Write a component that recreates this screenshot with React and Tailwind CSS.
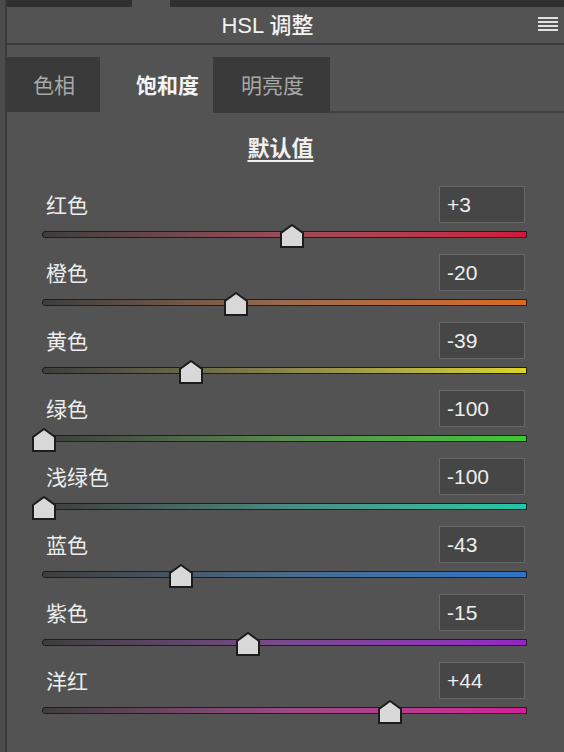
import React from 'react';

const rows = [
    { label: '红色', value: 3, track: 'bg-gradient-to-r from-[#3e3e3e] via-[#9a4c5a] to-[#d2143c]' },
    { label: '橙色', value: -20, track: 'bg-gradient-to-r from-[#3e3e3e] via-[#9a6a4c] to-[#d86a1c]' },
    { label: '黄色', value: -39, track: 'bg-gradient-to-r from-[#3e3e3e] via-[#8a864a] to-[#dcd428]' },
    { label: '绿色', value: -100, track: 'bg-gradient-to-r from-[#3e3e3e] via-[#5a8a50] to-[#3cc832]' },
    { label: '浅绿色', value: -100, track: 'bg-gradient-to-r from-[#3e3e3e] via-[#4a8a80] to-[#1cc8a8]' },
    { label: '蓝色', value: -43, track: 'bg-gradient-to-r from-[#3e3e3e] via-[#4a6c8c] to-[#2c74c8]' },
    { label: '紫色', value: -15, track: 'bg-gradient-to-r from-[#3e3e3e] via-[#7a4a8c] to-[#9424c8]' },
    { label: '洋红', value: 44, track: 'bg-gradient-to-r from-[#3e3e3e] via-[#9a4a84] to-[#d41c98]' },
];

const fmt = (v) => (v > 0 ? `+${v}` : `${v}`);

// petit curseur en forme de maison
const Thumb = ({ left }) => (
    <svg
        width="24"
        height="24"
        viewBox="0 0 24 24"
        className="absolute top-[-7px]"
        style={{ left }}
    >
        <polygon points="12,1 23,9 23,23 1,23 1,9" fill="#d8d8d8" stroke="#1c1c1c" strokeWidth="2" strokeLinejoin="miter" />
    </svg>
);

const SliderRow = ({ label, value, track }) => {
    const left = 2 + (value + 100) * 2.405 - 12;
    return (
        <div className="h-[68px] flex flex-col">
            <div className="h-[37px] flex items-center justify-between pr-[39px]">
                <span className="pl-[39px] text-[21px] text-[#eeeeee] leading-none">{label}</span>
                <div className="w-[86px] h-[37px] bg-[#464646] border border-[#686868] flex items-center pl-[7px] text-[21px] text-[#ededed] font-['Liberation_Sans',sans-serif]">
                    {fmt(value)}
                </div>
            </div>
            <div className="relative mt-[8px] ml-[35px] mr-[37px] h-[7px]">
                <div className={`h-full rounded-l-[3px] border border-[#1e1e1e] ${track}`}></div>
                <Thumb left={left} />
            </div>
        </div>
    );
};

const App = () => {
    return (
        <div className="w-[564px] h-[752px] bg-[#4b4b4b] flex font-['Noto_Sans_CJK_SC','Noto_Sans',sans-serif] overflow-hidden">
            <div className="w-[5px] bg-[#4b4b4b]"></div>
            <div className="w-[2px] bg-[#3a3a3a]"></div>
            <div className="flex-1 flex flex-col bg-[#535353]">
                <div className="h-[7px] flex bg-[#303030]">
                    <div className="w-[125px]"></div>
                    <div className="w-[38px] bg-[#535353]"></div>
                </div>
                <div className="h-[36px] flex items-center justify-center pr-[36px] relative">
                    <span className="text-[22px] text-[#f2f2f2] font-medium font-['Liberation_Sans','Noto_Sans_CJK_SC',sans-serif]">HSL 调整</span>
                    <div className="absolute right-[6px] top-[10px] flex flex-col gap-[2px]">
                        <div className="w-[20px] h-[2px] bg-[#e0e0e0]"></div>
                        <div className="w-[20px] h-[2px] bg-[#e0e0e0]"></div>
                        <div className="w-[20px] h-[2px] bg-[#e0e0e0]"></div>
                        <div className="w-[20px] h-[2px] bg-[#e0e0e0]"></div>
                    </div>
                </div>
                <div className="h-[2px] bg-[#3a3a3a]"></div>
                <div className="h-[12px]"></div>
                <div className="h-[56px] flex">
                    <div className="w-[93px] h-[55px] bg-[#3a3a3a] flex items-center pl-[26px] text-[21px] text-[#a8a8a8]">色相</div>
                    <div className="w-[113px] flex items-center pl-[36px] text-[21px] text-[#f4f4f4] font-semibold">饱和度</div>
                    <div className="w-[117px] h-[56px] bg-[#3a3a3a] flex items-center pl-[28px] text-[21px] text-[#a8a8a8]">明亮度</div>
                    <div className="flex-1 flex flex-col justify-end">
                        <div className="h-[2px] bg-[#404040]"></div>
                    </div>
                </div>
                <div className="h-[73px] flex items-center justify-center pb-[6px] pr-[10px]">
                    <span className="text-[22px] text-[#f0f0f0] font-semibold underline underline-offset-[4px]">默认值</span>
                </div>
                <div className="flex flex-col">
                    {rows.map((r) => (
                        <SliderRow key={r.label} {...r} />
                    ))}
                </div>
            </div>
        </div>
    );
};

export default App;
